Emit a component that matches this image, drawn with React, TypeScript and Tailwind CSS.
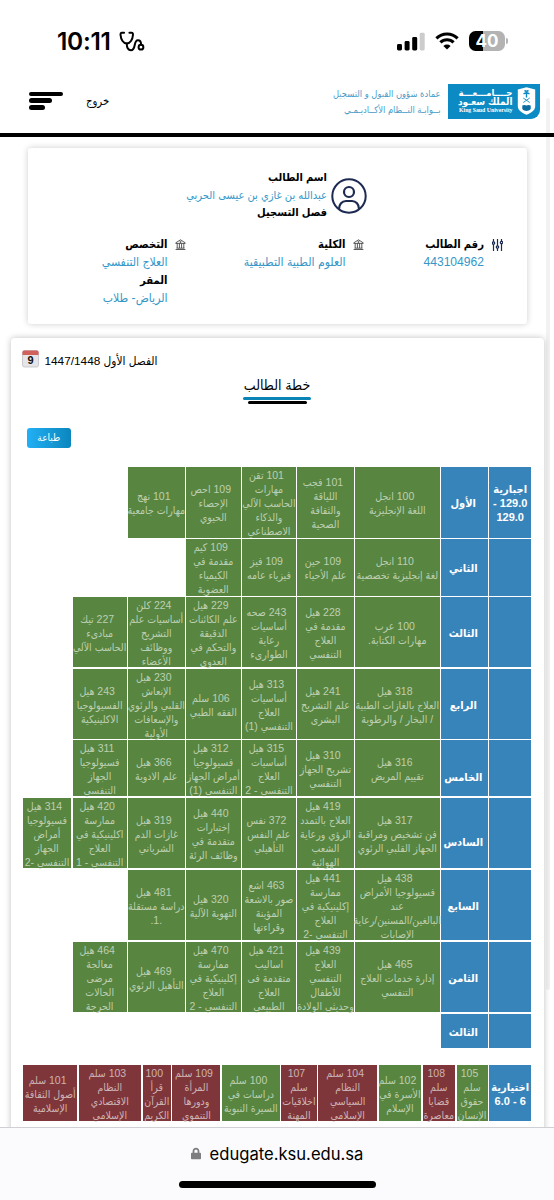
import type { ReactNode } from 'react';
import { FaLock } from 'react-icons/fa';

type Tone = 'green' | 'red';

interface Course {
  lines: string[];
  w: string;
  tone?: Tone;
}

interface Level {
  name: string;
  h: string;
  nudge?: string;
  head?: string[];
  courses: string[][];
}

// column widths, right to left
const COLS = ['w-[84.5px]', 'w-[56.2px]', 'w-[53.8px]', 'w-[54.5px]', 'w-[56.5px]', 'w-[53.8px]', 'w-[48.5px]'];

const LEVELS: Level[] = [
  {
    name: 'الأول',
    h: 'h-[70.5px]',
    head: ['اجبارية', '129.0 -', '129.0'],
    courses: [
      ['100 انجل', 'اللغة الإنجليزية'],
      ['101 فجب', 'اللياقة', 'والثقافة', 'الصحية'],
      ['101 تقن', 'مهارات', 'الحاسب الآلي', 'والذكاء', 'الاصطناعي'],
      ['109 احص', 'الإحصاء', 'الحيوي'],
      ['101 نهج', 'مهارات جامعية'],
    ],
  },
  {
    name: 'الثاني',
    h: 'h-[56.5px]',
    courses: [
      ['110 انجل', 'لغة إنجليزية تخصصية'],
      ['109 حين', 'علم الأحياء'],
      ['109 فيز', 'فيزياء عامه'],
      ['109 كيم', 'مقدمة في', 'الكيمياء', 'العضوية'],
    ],
  },
  {
    name: 'الثالث',
    h: 'h-[70.2px]',
    courses: [
      ['100 عرب', 'مهارات الكتابة.'],
      ['228 هيل', 'مقدمة في', 'العلاج', 'التنفسي'],
      ['243 صحه', 'أساسيات', 'رعاية', 'الطوارىء'],
      ['229 هيل', 'علم الكائنات', 'الدقيقة', 'والتحكم في', 'العدوى'],
      ['224 كلن', 'أساسيات علم', 'التشريح', 'ووظائف', 'الأعضاء'],
      ['227 تيك', 'مبادىء', 'الحاسب الآلي'],
    ],
  },
  {
    name: 'الرابع',
    h: 'h-[70.1px]',
    courses: [
      ['318 هيل', 'العلاج بالغازات الطبية', '/ البخار / والرطوبة'],
      ['241 هيل', 'علم التشريح', 'البشرى'],
      ['313 هيل', 'أساسيات', 'العلاج', 'التنفسي (1)'],
      ['106 سلم', 'الفقه الطبي'],
      ['230 هيل', 'الإنعاش', 'القلبي والرئوي', 'والإسعافات', 'الأولية'],
      ['243 هيل', 'الفسيولوجيا', 'الاكلينيكية'],
    ],
  },
  {
    name: 'الخامس',
    h: 'h-[56.2px]',
    nudge: 'pt-[17px]',
    courses: [
      ['316 هيل', 'تقييم المريض'],
      ['310 هيل', 'تشريح الجهاز', 'التنفسي'],
      ['315 هيل', 'أساسيات', 'العلاج', 'التنفسي - 2'],
      ['312 هيل', 'فسيولوجيا', 'أمراض الجهاز', 'التنفسي (1)'],
      ['366 هيل', 'علم الادوية'],
      ['311 هيل', 'فسيولوجيا', 'الجهاز', 'التنفسي'],
    ],
  },
  {
    name: 'السادس',
    h: 'h-[70.5px]',
    nudge: 'pt-[17px]',
    courses: [
      ['317 هيل', 'فن تشخيص ومراقبة', 'الجهاز القلبي الرئوي'],
      ['419 هيل', 'العلاج بالتمدد', 'الرؤي ورعاية', 'الشعب', 'الهوائية'],
      ['372 نفس', 'علم النفس', 'التأهيلي'],
      ['440 هيل', 'إختبارات', 'متقدمة في', 'وظائف الرئة'],
      ['319 هيل', 'غازات الدم', 'الشرياني'],
      ['420 هيل', 'ممارسة', 'اكلينيكية في', 'العلاج', 'التنفسي - 1'],
      ['314 هيل', 'فسيولوجيا', 'أمراض', 'الجهاز', 'التنفسي -2'],
    ],
  },
  {
    name: 'السابع',
    h: 'h-[70.2px]',
    courses: [
      ['438 هيل', 'فسيولوجيا الأمراض', 'عند', 'البالغين/المسنين/رعاية', 'الإصابات'],
      ['441 هيل', 'ممارسة', 'إكلينيكية في', 'العلاج', 'التنفسي -2'],
      ['463 اشع', 'صور بالاشعة', 'المؤينة', 'وقراءتها'],
      ['320 هيل', 'التهوية الآلية'],
      ['481 هيل', 'دراسة مستقلة', '.1.'],
    ],
  },
  {
    name: 'الثامن',
    h: 'h-[70.5px]',
    courses: [
      ['465 هيل', 'إدارة خدمات العلاج', 'التنفسي'],
      ['439 هيل', 'العلاج', 'التنفسي', 'للأطفال', 'وحديثي الولادة'],
      ['421 هيل', 'اساليب', 'متقدمة فى', 'العلاج', 'الطبيعي'],
      ['470 هيل', 'ممارسة', 'إكلينيكية في', 'العلاج', 'التنفسي - 2'],
      ['469 هيل', 'التأهيل الرئوي'],
      ['464 هيل', 'معالجة', 'مرضى', 'الحالات', 'الحرجة'],
    ],
  },
  { name: 'الثالث', h: 'h-[34.5px]', courses: [] },
];

const ELECTIVES: Course[] = [
  { w: 'w-[31px]', lines: ['105', 'سلم', 'حقوق', 'الإنسان'] },
  { w: 'w-[32.5px]', tone: 'red', lines: ['108', 'سلم', 'قضايا', 'معاصرة'] },
  { w: 'w-[42.3px]', lines: ['102 سلم', 'الأسرة في', 'الإسلام'] },
  { w: 'w-[59.1px]', tone: 'red', lines: ['104 سلم', 'النظام', 'السياسي', 'الإسلامي'] },
  { w: 'w-[35.4px]', tone: 'red', lines: ['107', 'سلم', 'اخلاقيات', 'المهنة'] },
  { w: 'w-[57.8px]', lines: ['100 سلم', 'دراسات في', 'السيرة النبوية'] },
  { w: 'w-[48px]', tone: 'red', lines: ['109 سلم', 'المرأة', 'ودورها', 'التنموي'] },
  { w: 'w-[28.4px]', tone: 'red', lines: ['100', 'قرأ', 'القرآن', 'الكريم'] },
  { w: 'w-[62.5px]', tone: 'red', lines: ['103 سلم', 'النظام', 'الاقتصادي', 'الإسلامي'] },
  { w: 'w-[53.8px]', tone: 'red', lines: ['101 سلم', 'أصول الثقافة', 'الإسلامية'] },
];

function CourseCell({ lines, w, tone = 'green' }: Course) {
  return (
    <div
      className={`${w} ${tone === 'red' ? 'bg-[#7f363a] text-[#cdb3b4]' : 'bg-[#588640] text-[#bdcfb2]'} flex h-full shrink-0 flex-col items-center justify-center pt-[2px] text-[10.5px] leading-[14.1px] whitespace-nowrap`}
    >
      {lines.map((line, i) => (
        <span key={i} className={i === 0 ? 'pr-[5px]' : ''}>{line}</span>
      ))}
    </div>
  );
}

function HeadCell({ w, nudge = 'pt-[2px]', children }: { w: string; nudge?: string; children?: ReactNode }) {
  return (
    <div className={`${w} ${nudge} flex h-full shrink-0 flex-col items-center justify-center bg-[#3784bb] text-[11px] leading-[14.1px] font-bold whitespace-nowrap text-white`}>
      {children}
    </div>
  );
}

function StatusBar() {
  return (
    <div className="flex h-[83.5px] items-start justify-between pt-[27px] pr-[46px] pl-[57px]">
      <div className="flex items-center gap-[8px]">
        <span className="font-[Inter] text-[24.5px] leading-[29px] font-semibold tracking-[-0.3px]">10:11</span>
        <svg width="26" height="21" viewBox="0 0 27 22" fill="none" stroke="#000" strokeWidth="2.1" strokeLinecap="round" strokeLinejoin="round">
          <path d="M5.2 1.8H3C1.6 1.8 1.4 3 1.5 4.2 1.9 9 4.5 13.2 8 13.2s6.1-4.2 6.5-9c.1-1.2-.1-2.4-1.5-2.4h-2.2" />
          <path d="M8 13.2c0 4.5 1.6 7 4.4 7 5.8 0 2.2-10.5 7.3-10.5 2.3 0 3.3 1.9 3.3 4.6" />
          <circle cx="22.9" cy="16.9" r="2.5" />
        </svg>
      </div>
      <div className="flex h-[28px] items-center">
        <svg width="28" height="19" viewBox="0 0 28 19">
          <rect x="0" y="12" width="5" height="6.5" rx="1.4" />
          <rect x="7.6" y="9" width="5" height="9.5" rx="1.4" />
          <rect x="15.2" y="5" width="5" height="13.5" rx="1.4" />
          <rect x="22.7" y="0.8" width="5" height="17.7" rx="1.4" fill="#ccc" />
        </svg>
        <svg className="ml-[10px]" width="24" height="18" viewBox="0 0 24 18" fill="none" stroke="#000" strokeWidth="3.1">
          <path d="M1.4 6.3a15.2 15.2 0 0 1 21.2 0" />
          <path d="M5.4 10.4a9.4 9.4 0 0 1 13.2 0" />
          <path d="M12 17.5 8.4 13.9a5.2 5.2 0 0 1 7.2 0Z" fill="#000" stroke="none" />
        </svg>
        <div className="ml-[10px] flex items-center gap-[1px]">
          <div className="flex h-[20px] w-[36px] items-center justify-center rounded-[6.5px] bg-[linear-gradient(90deg,#000_40%,#b3b3b3_40%)] font-[Inter] text-[17px] leading-none font-bold text-white">
            40
          </div>
          <div className="h-[6px] w-[2px] rounded-r-full bg-[#b3b3b3]" />
        </div>
      </div>
    </div>
  );
}

function Header() {
  return (
    <header className="flex h-[53.5px] items-start justify-between border-b-[4.5px] border-black pr-[14.5px] pl-[29px]">
      <div className="flex pt-[8px]">
        <div className="flex flex-col gap-[2.8px]">
          <div className="h-[4.2px] w-[34px] rounded-full bg-black" />
          <div className="h-[4.2px] w-[23px] rounded-full bg-black" />
          <div className="h-[4.2px] w-[16px] rounded-full bg-black" />
        </div>
        <span className="ml-[23px] text-[11.2px] leading-[18px]">خروج</span>
      </div>
      <div className="flex">
        <div className="mr-[7px] flex flex-col text-[9.3px] leading-[16px] whitespace-nowrap text-[#4a9cc8]" dir="rtl">
          <span className="mt-[2px]">عمادة شؤون القبول و التسجيل</span>
          <span>بــوابـة النــظام الأكــاديـمـي</span>
        </div>
        <div className="flex h-[35px] w-[92px] items-center justify-end rounded-br-[9px] bg-[#0c8ac4] pr-[4px] text-white">
          <div className="mr-[4px] flex flex-col items-end whitespace-nowrap" dir="ltr">
            <span className="text-[9.5px] leading-[9px] font-bold">جــــامـــعـــة</span>
            <span className="text-[10px] leading-[9px] font-bold">الملك سعـود</span>
            <span className="font-['Liberation_Serif'] text-[5.8px] leading-[9px] font-bold">King Saud University</span>
          </div>
          <svg width="19" height="28" viewBox="0 0 19 28">
            <path d="M0.8 2.5 9.5 0.3l8.7 2.2V19c0 4-3.2 6.6-8.7 8.7C4 25.6.8 23 .8 19Z" fill="#fff" />
            <path d="M9.5 10.500V5M9.5 5.5 6.5 6.8M9.5 5.5l3 1.3M9.5 4.5 7.5 3.5M9.5 4.5l2-1" stroke="#0c8ac4" strokeWidth="1.4" fill="none" />
            <path d="m6.3 11 6.4 4.5M12.7 11 6.3 15.5" stroke="#0c8ac4" strokeWidth="0.9" />
            <path d="M5.3 18.5c1.4-.8 3-.8 4.2 0 1.2-.8 2.8-.8 4.2 0v3.4c-1.3 1.6-2.8 1.9-4.2 2-1.4-.1-2.9-.4-4.2-2Z" fill="#0c6ca0" />
          </svg>
        </div>
      </div>
    </header>
  );
}

function BankIcon() {
  return (
    <svg width="11" height="11" viewBox="0 0 11 11" fill="none" stroke="#333" strokeWidth="0.8">
      <path d="M.8 3.8 5.5.8l4.7 3v.6H.8ZM1.5 9.2h8M.6 10.5h9.8M2.2 4.5v4.5M4.4 4.5v4.5M6.6 4.5v4.5M8.8 4.5v4.5" />
      <circle cx="5.5" cy="2.9" r=".6" />
    </svg>
  );
}

function Field({ icon, label, value, children }: { icon: ReactNode; label: string; value: string; children?: ReactNode }) {
  return (
    <div className="flex items-start gap-[7.5px] whitespace-nowrap">
      <div className="flex h-[13px] w-[11px] items-center">{icon}</div>
      <div className="flex flex-col text-[12.1px] leading-[17.8px]">
        <span className="-mt-[2px] text-[11.2px] font-bold">{label}</span>
        <span className="text-[#3497c8]">{value}</span>
        {children}
      </div>
    </div>
  );
}

function StudentCard() {
  return (
    <section className="mx-auto mt-[11px] flex h-[176px] w-[499px] flex-col rounded-[3px] bg-white pt-[21px] shadow-[0_0_6px_rgba(0,0,0,0.2)]">
      <div className="flex items-center gap-[3.5px] pr-[160px] text-[11.1px] leading-[17.7px] whitespace-nowrap">
        <svg width="36" height="36" viewBox="0 0 36 36" fill="none" stroke="#1c2951" strokeWidth="2">
          <circle cx="18" cy="18" r="16.7" />
          <circle cx="18" cy="14" r="5" strokeWidth="2.2" />
          <path d="M8 31c0-4.8 3-8 7-8h6c4 0 7 3.2 7 8" strokeWidth="2.2" />
        </svg>
        <div className="flex flex-col">
          <span className="font-bold">اسم الطالب</span>
          <span className="text-[#3497c8]">عبدالله بن غازي بن عيسى الحربي</span>
          <span className="font-bold">فصل التسجيل</span>
        </div>
      </div>
      <div className="mt-[16px] grid grid-cols-[138.5px_178px_1fr] pr-[24px]">
        <Field
          label="رقم الطالب"
          value="443104962"
          icon={
            <svg width="11" height="12" viewBox="0 0 11 12" stroke="#1c2951" strokeWidth="1.2">
              <path d="M1.5 0v12M5.5 0v12M9.5 0v12" />
              <g fill="#fff">
                <circle cx="1.5" cy="4" r="1.2" />
                <circle cx="5.5" cy="8" r="1.2" />
                <circle cx="9.5" cy="3.5" r="1.2" />
              </g>
            </svg>
          }
        />
        <Field label="الكلية" value="العلوم الطبية التطبيقية" icon={<BankIcon />} />
        <Field label="التخصص" value="العلاج التنفسي" icon={<BankIcon />}>
          <span className="text-[11.2px] font-bold">المقر</span>
          <span className="text-[#3497c8]">الرياض- طلاب</span>
        </Field>
      </div>
    </section>
  );
}

function CalendarIcon() {
  return (
    <svg width="17" height="18" viewBox="0 0 17 18">
      <rect x="0.5" y="0.5" width="16" height="16.5" rx="2" fill="#e6e6e8" stroke="#b9b9bd" strokeWidth="0.7" />
      <path d="M0.5 5V2.2Q.5.5 2.2.5h12.6q1.7 0 1.7 1.7V5Z" fill="#d0615d" />
      <text x="8.5" y="14" textAnchor="middle" fontSize="11" fontWeight="bold" fontFamily="Liberation Sans" fill="#111">
        9
      </text>
    </svg>
  );
}

function PlanCard() {
  return (
    <section className="mr-[10.5px] ml-[10.5px] mt-[14px] h-[800px] rounded-[4px] bg-white shadow-[0_0_6px_rgba(0,0,0,0.25)]">
      <div className="flex h-[33px] items-start justify-end gap-[6px] pt-[11.5px] pl-[11px]">
        <span className="pt-[4px] text-[11.8px] leading-[15px]">الفصل الأول 1447/1448</span>
        <CalendarIcon />
      </div>
      <div className="flex flex-col items-center pt-[4px]">
        <h1 className="text-[14px] leading-[20px]">خطة الطالب</h1>
        <div className="mt-[2px] h-[3px] w-[68px] rounded-full bg-[#0a84b5]" />
        <div className="mt-[1px] h-[2.5px] w-[59px] rounded-full bg-black" />
      </div>
      <div className="flex justify-end pt-[24px] pl-[16.5px]">
        <button className="h-[20px] w-[43.5px] rounded-[3px] bg-linear-to-r from-[#22b0f5] to-[#0a86bd] text-[10px] leading-none text-white">طباعة</button>
      </div>

      <div className="mt-[19.5px] flex flex-col gap-[1.5px] pr-[12.1px]">
        {LEVELS.map((level, i) => (
          <div key={i} className={`flex gap-[1.5px] ${level.h}`}>
            <HeadCell w="w-[42.4px]">
              {level.head?.map((line, j) => <span key={j}>{line}</span>)}
            </HeadCell>
            <HeadCell w="w-[46.5px]" nudge={level.nudge}>
              <span className="pr-[2px]">{level.name}</span>
            </HeadCell>
            {level.courses.map((lines, j) => (
              <CourseCell key={j} lines={lines} w={COLS[j]} />
            ))}
          </div>
        ))}
      </div>

      <div className="mt-[17px] flex h-[56px] gap-[1.5px] pr-[12.1px]">
        <HeadCell w="w-[42.4px]">
          <span>اختيارية</span>
          <span>6 - 6.0</span>
        </HeadCell>
        {ELECTIVES.map((course, i) => (
          <CourseCell key={i} {...course} />
        ))}
      </div>
    </section>
  );
}

function AddressBar() {
  return (
    <footer className="flex h-[73.5px] shrink-0 flex-col items-center border-t border-[#cfcfd4] bg-[#fbfbfd]">
      <div className="mt-[14px] flex items-center gap-[9px]">
        <FaLock className="h-[13px] w-[10px] text-[#7d7d80]" />
        <span className="font-[Inter] text-[16.6px] leading-[24px]">edugate.ksu.edu.sa</span>
      </div>
      <div className="mt-[15.5px] h-[7px] w-[197px] rounded-full bg-black" />
    </footer>
  );
}

export default function App() {
  return (
    <div className="relative flex h-[1200px] w-[554px] flex-col overflow-hidden bg-white font-['Liberation_Sans','DejaVu_Sans_Condensed','DejaVu_Sans',sans-serif] text-black">
      <StatusBar />
      <Header />
      <main className="min-h-0 flex-1 overflow-hidden" dir="rtl">
        <StudentCard />
        <PlanCard />
      </main>
      <AddressBar />
      {/* scroll indicator */}
      <div className="absolute top-[98px] left-[546px] h-[892px] w-[4px] rounded-full bg-black/5" />
    </div>
  );
}
